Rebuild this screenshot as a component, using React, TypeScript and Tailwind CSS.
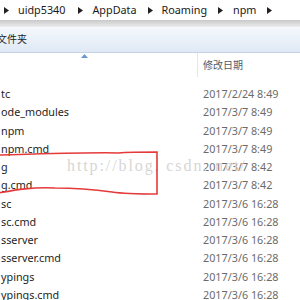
import React from "react";

const rows: [string, string][] = [
  ["tc", "2017/2/24 8:49"],
  ["ode_modules", "2017/3/7 8:49"],
  ["npm", "2017/3/7 8:49"],
  ["npm.cmd", "2017/3/7 8:49"],
  ["g", "2017/3/7 8:42"],
  ["g.cmd", "2017/3/7 8:42"],
  ["sc", "2017/3/6 16:28"],
  ["sc.cmd", "2017/3/6 16:28"],
  ["sserver", "2017/3/6 16:28"],
  ["sserver.cmd", "2017/3/6 16:28"],
  ["ypings", "2017/3/6 16:28"],
  ["ypings.cmd", "2017/3/6 16:28"],
];

const Arrow = () => (
  <svg width="5" height="7" viewBox="0 0 5 7" className="shrink-0">
    <path d="M0 0 L5 3.5 L0 7 Z" fill="#222" />
  </svg>
);

export default function App() {
  const font = { fontFamily: '"Noto Sans", "Noto Sans CJK SC", sans-serif' };
  return (
    <div className="relative w-[300px] h-[300px] overflow-hidden bg-white" style={font}>
      {/* address bar */}
      <div className="h-[20px] flex items-center bg-white text-[10.8px] text-[#1a1a1a] pl-[4px]">
        <Arrow />
        <span className="ml-[9px]">uidp5340</span>
        <span className="ml-[13px]"><Arrow /></span>
        <span className="ml-[9px]">AppData</span>
        <span className="ml-[11px]"><Arrow /></span>
        <span className="ml-[9px]">Roaming</span>
        <span className="ml-[11px]"><Arrow /></span>
        <span className="ml-[10px]">npm</span>
        <span className="ml-[11px]"><Arrow /></span>
      </div>
      <div className="h-[7px] bg-gradient-to-b from-[#c9c9c9] to-[#ececec]" />
      {/* toolbar */}
      <div className="h-[26px] flex items-center bg-gradient-to-b from-[#f5f8fc] to-[#dfe9f5] border-b border-[#c5d3e3] text-[10px] text-[#1e1e1e]">
        <span className="-ml-[3px] whitespace-nowrap">文件夹</span>
      </div>
      {/* header */}
      <div className="relative h-[24px] flex items-center text-[10px] text-[#4c607a]">
        <div className="w-[197px] h-full relative">
          <svg width="7" height="4" viewBox="0 0 7 4" className="absolute left-[81px] top-[1px]">
            <path d="M0 4 L3.5 0 L7 4 Z" fill="#6a9bd0" />
          </svg>
        </div>
        <div className="w-px h-full bg-[#e3e8ee]" />
        <span className="ml-[5px] text-[#4d5b6e]">修改日期</span>
      </div>
      {/* rows */}
      <div className="mt-[8px] flex flex-col">
        {rows.map(([n, d], i) => (
          <div key={i} className="h-[18.25px] flex items-center text-[10.8px]">
            <div className="w-[203px] pl-[1px] text-[#1e1e1e] whitespace-nowrap">{n}</div>
            <div className="text-[#6b6b6b] whitespace-nowrap">{d}</div>
          </div>
        ))}
      </div>
      {/* watermark */}
      <div
        className="absolute left-[67px] top-[154px] text-[16px] text-[#d6d6d6] tracking-[1.9px] whitespace-pre"
        style={{ fontFamily: '"Liberation Serif", serif' }}
      >
        http://blog. csdn. net/
      </div>
      {/* red annotation */}
      <svg className="absolute left-0 top-0" width="300" height="300" viewBox="0 0 300 300">
        <path
          d="M-2 155 C 40 154, 100 152, 118 153 C 130 152, 145 152, 157 152 L 157 194 C 140 194, 125 194, 112 192 C 90 189, 70 188, 55 188 C 30 187, 15 190, -2 193"
          fill="none"
          stroke="#e53a3a"
          strokeWidth="1.6"
        />
      </svg>
    </div>
  );
}
